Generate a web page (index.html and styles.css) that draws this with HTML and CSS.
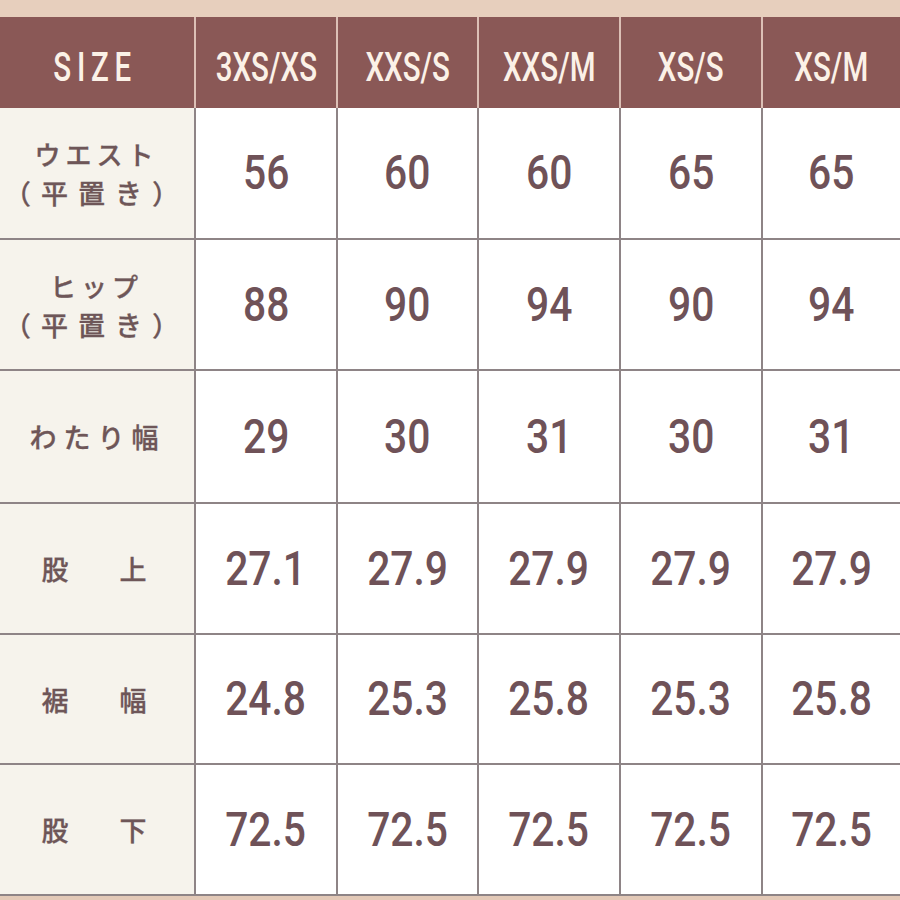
FILE: index.html
```html
<!DOCTYPE html>
<html lang="ja">
<head>
<meta charset="utf-8">
<title>Size chart</title>
<link rel="stylesheet" href="styles.css">
</head>
<body>
<div class="page">
  <div class="band-top"></div>
  <div class="chart">
    <div class="cell head first"><span class="hd hd-size">SIZE</span></div>
    <div class="cell head"><span class="hd">3XS/XS</span></div>
    <div class="cell head"><span class="hd">XXS/S</span></div>
    <div class="cell head"><span class="hd">XXS/M</span></div>
    <div class="cell head"><span class="hd">XS/S</span></div>
    <div class="cell head"><span class="hd">XS/M</span></div>

    <div class="cell label r1"><span class="lb">ウエスト<br><span class="paren">（平置き）</span></span></div>
    <div class="cell num r1"><span class="n">56</span></div>
    <div class="cell num r1"><span class="n">60</span></div>
    <div class="cell num r1"><span class="n">60</span></div>
    <div class="cell num r1"><span class="n">65</span></div>
    <div class="cell num r1"><span class="n">65</span></div>

    <div class="cell label"><span class="lb">ヒップ<br><span class="paren">（平置き）</span></span></div>
    <div class="cell num"><span class="n">88</span></div>
    <div class="cell num"><span class="n">90</span></div>
    <div class="cell num"><span class="n">94</span></div>
    <div class="cell num"><span class="n">90</span></div>
    <div class="cell num"><span class="n">94</span></div>

    <div class="cell label"><span class="lb lb-spaced">わたり幅</span></div>
    <div class="cell num"><span class="n">29</span></div>
    <div class="cell num"><span class="n">30</span></div>
    <div class="cell num"><span class="n">31</span></div>
    <div class="cell num"><span class="n">30</span></div>
    <div class="cell num"><span class="n">31</span></div>

    <div class="cell label wide"><span class="lb lb-wide">股　　上</span></div>
    <div class="cell num"><span class="n">27.1</span></div>
    <div class="cell num"><span class="n">27.9</span></div>
    <div class="cell num"><span class="n">27.9</span></div>
    <div class="cell num"><span class="n">27.9</span></div>
    <div class="cell num"><span class="n">27.9</span></div>

    <div class="cell label wide"><span class="lb lb-wide">裾　　幅</span></div>
    <div class="cell num"><span class="n">24.8</span></div>
    <div class="cell num"><span class="n">25.3</span></div>
    <div class="cell num"><span class="n">25.8</span></div>
    <div class="cell num"><span class="n">25.3</span></div>
    <div class="cell num"><span class="n">25.8</span></div>

    <div class="cell label wide last"><span class="lb lb-wide">股　　下</span></div>
    <div class="cell num last"><span class="n">72.5</span></div>
    <div class="cell num last"><span class="n">72.5</span></div>
    <div class="cell num last"><span class="n">72.5</span></div>
    <div class="cell num last"><span class="n">72.5</span></div>
    <div class="cell num last"><span class="n">72.5</span></div>
  </div>
</div>
</body>
</html>
```
FILE: styles.css
```css
html, body {
  margin: 0;
  padding: 0;
  background: #e3c9b7;
}
.page {
  width: 900px;
  height: 900px;
  overflow: hidden;
  display: flex;
  flex-direction: column;
}
.band-top {
  height: 17px;
  background: #e7cfbd;
  flex: none;
}
.chart {
  display: grid;
  grid-template-columns: 194px 142px 141px 142px 142px 139px;
  grid-template-rows: 91px 130px 131px 133px 131px 130px 133px;
  flex: none;
}
.cell {
  box-sizing: border-box;
  display: flex;
  align-items: center;
  justify-content: center;
  overflow: hidden;
}
.head {
  background: #8a5856;
  border-left: 2px solid #dcc0b6;
  padding-top: 9px;
}
.head.first {
  border-left: none;
  padding-right: 12px;
}
.hd {
  display: inline-block;
  font-family: Roboto, "Liberation Sans", sans-serif;
  font-weight: 500;
  font-size: 41px;
  line-height: 1;
  color: #fbf1e7;
  transform: scaleX(0.72);
  white-space: nowrap;
}
.hd-size {
  letter-spacing: 8px;
  margin-right: -8px;
}
.label {
  background: #f6f3ec;
  border-top: 2px solid #8e8486;
  padding-right: 6px;
}
.label.wide {
  padding-right: 7px;
}
.num {
  background: #ffffff;
  border-top: 2px solid #8e8486;
  border-left: 2px solid #8e8486;
}
.r1 {
  border-top: none;
}
.last {
  border-bottom: 2px solid #8e8486;
}
.lb {
  font-family: "Noto Sans CJK JP", "Noto Sans", sans-serif;
  font-weight: 500;
  font-size: 26px;
  line-height: 39px;
  letter-spacing: 5px;
  margin-right: -5px;
  color: #6e5658;
  text-align: center;
  white-space: nowrap;
  -webkit-text-stroke: 0.3px #6e5658;
}
.paren {
  font-size: 27px;
  letter-spacing: 10px;
  margin-right: 0;
}
.lb-spaced {
  font-size: 27px;
  letter-spacing: 7px;
  margin-right: -7px;
}
.lb-wide {
  font-size: 27px;
  letter-spacing: -1px;
  margin-right: 0;
}
.n {
  display: inline-block;
  font-family: Roboto, "Liberation Sans", sans-serif;
  font-weight: 500;
  font-size: 48px;
  line-height: 1;
  color: #6f5258;
  transform: scaleX(0.85);
  white-space: nowrap;
}
```
